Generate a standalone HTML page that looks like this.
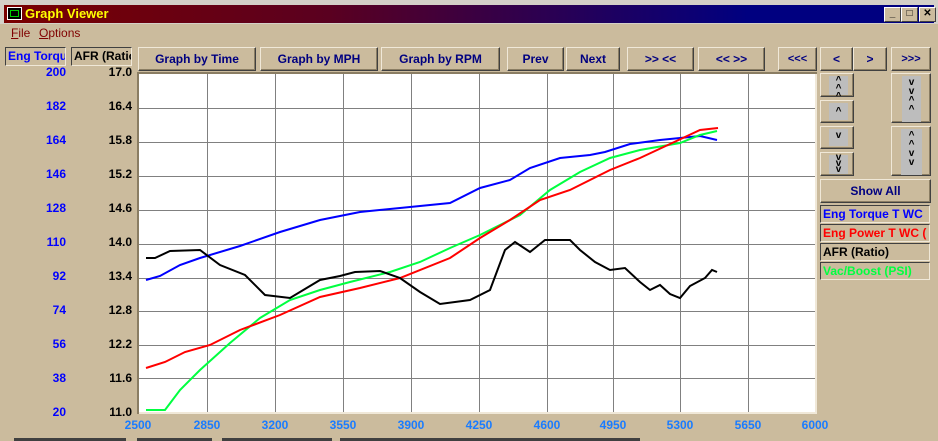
<!DOCTYPE html><html><head><style>
body{margin:0;width:938px;height:441px;background:#cbbb9d;position:relative;overflow:hidden;font-family:"Liberation Sans",sans-serif}
.a{position:absolute}
.title{left:0;top:0;width:938px;height:24px;background:#d4d0c8}
.tb{left:4px;top:5px;width:930px;height:18px;background:linear-gradient(90deg,#7a0000,#5a0020 35%,#000080 80%,#000080)}
.tt{left:25px;top:6px;color:#ff0;font-weight:bold;font-size:13px}
.wb{top:7px;width:15px;height:13px;background:#cbbb9d;border:1px solid;border-color:#fff #404040 #404040 #fff;font-size:10px;text-align:center;line-height:12px;font-weight:bold}
.menu{top:26px;font-size:12px;color:#800000}
.btn{position:absolute;background:#cbbb9d;border:1px solid;border-color:#f0e8d8 #404040 #404040 #f0e8d8;box-shadow:inset -1px -1px #8a7d63;color:#000080;font-weight:bold;font-size:12px;text-align:center;box-sizing:border-box;white-space:nowrap;overflow:hidden}
.lb{position:absolute;font-size:12px;font-weight:bold;text-align:right;width:40px}
.xl{position:absolute;top:418px;font-size:12px;font-weight:bold;color:#1a7cff;width:50px;text-align:center}
.lg{position:absolute;left:820px;width:110px;height:18px;border:1px solid;border-color:#404040 #f0e8d8 #f0e8d8 #404040;box-sizing:border-box;font-size:12px;font-weight:bold;padding-left:2px;line-height:16px;white-space:nowrap;overflow:hidden}
.g{background:#bdbdbd;position:absolute;font-size:10px;line-height:8px;text-align:center;color:#000}
</style></head><body>
<div class="a title"></div>
<div class="a tb"></div>
<div class="a" style="left:7px;top:7px;width:13px;height:11px;background:#000;border:1px solid #fff"><div style="margin:2px;height:5px;border:1px solid #0c0"></div></div>
<div class="a tt">Graph Viewer</div>
<div class="a wb" style="left:884px">_</div><div class="a wb" style="left:901px">□</div><div class="a wb" style="left:919px">✕</div>
<div class="a menu" style="left:11px"><u>F</u>ile</div><div class="a menu" style="left:39px"><u>O</u>ptions</div>
<div class="a" style="left:5px;top:47px;width:61px;height:19px;border:1px solid;border-color:#404040 #f0e8d8 #f0e8d8 #404040;box-sizing:border-box;color:#0000ff;font-size:12px;font-weight:bold;line-height:17px;padding-left:2px;overflow:hidden;white-space:nowrap">Eng Torque</div>
<div class="a" style="left:71px;top:47px;width:61px;height:19px;border:1px solid;border-color:#404040 #f0e8d8 #f0e8d8 #404040;box-sizing:border-box;color:#000;font-size:12px;font-weight:bold;line-height:17px;padding-left:2px;overflow:hidden;white-space:nowrap">AFR (Ratio)</div>
<div class="btn" style="left:138px;top:47px;width:118px;height:24px;line-height:22px">Graph by Time</div>
<div class="btn" style="left:260px;top:47px;width:118px;height:24px;line-height:22px">Graph by MPH</div>
<div class="btn" style="left:381px;top:47px;width:119px;height:24px;line-height:22px">Graph by RPM</div>
<div class="btn" style="left:507px;top:47px;width:57px;height:24px;line-height:22px">Prev</div>
<div class="btn" style="left:566px;top:47px;width:54px;height:24px;line-height:22px">Next</div>
<div class="btn" style="left:627px;top:47px;width:67px;height:24px;line-height:22px">&gt;&gt; &lt;&lt;</div>
<div class="btn" style="left:698px;top:47px;width:67px;height:24px;line-height:22px">&lt;&lt; &gt;&gt;</div>
<div class="btn" style="left:778px;top:47px;width:39px;height:24px;line-height:22px;font-size:11px">&lt;&lt;&lt;</div>
<div class="btn" style="left:820px;top:47px;width:33px;height:24px;line-height:22px">&lt;</div>
<div class="btn" style="left:853px;top:47px;width:34px;height:24px;line-height:22px">&gt;</div>
<div class="btn" style="left:891px;top:47px;width:40px;height:24px;line-height:22px;font-size:11px">&gt;&gt;&gt;</div>
<div class="btn" style="left:820px;top:73px;width:34px;height:24px"><div class="g" style="left:8px;top:2px;width:19px;height:18px;padding-top:1px">^<br>^<br>^</div></div>
<div class="btn" style="left:820px;top:100px;width:34px;height:23px"><div class="g" style="left:8px;top:2px;width:19px;height:17px;line-height:17px">^</div></div>
<div class="btn" style="left:820px;top:126px;width:34px;height:23px"><div class="g" style="left:8px;top:2px;width:19px;height:17px;line-height:14px">v</div></div>
<div class="btn" style="left:820px;top:152px;width:34px;height:24px"><div class="g" style="left:8px;top:2px;width:19px;height:19px;line-height:6px;padding-top:0">v<br>v<br>v</div></div>
<div class="btn" style="left:891px;top:73px;width:40px;height:50px"><div class="g" style="left:10px;top:2px;width:19px;height:44px;line-height:9px;padding-top:2px">v<br>v<br>^<br>^</div></div>
<div class="btn" style="left:891px;top:126px;width:40px;height:50px"><div class="g" style="left:9px;top:2px;width:21px;height:44px;line-height:9px;padding-top:2px">^<br>^<br>v<br>v</div></div>
<div class="btn" style="left:820px;top:179px;width:111px;height:24px;line-height:22px">Show All</div>
<div class="lg" style="top:205px;color:#0000ff">Eng Torque T WC</div>
<div class="lg" style="top:224px;color:#ff0000">Eng Power T WC (</div>
<div class="lg" style="top:243px;color:#000">AFR (Ratio)</div>
<div class="lg" style="top:262px;color:#00ff40">Vac/Boost (PSI)</div>
<div class="lb" style="left:26px;top:65px;color:#0000ff">200</div><div class="lb" style="left:92px;top:65px">17.0</div>
<div class="lb" style="left:26px;top:99px;color:#0000ff">182</div><div class="lb" style="left:92px;top:99px">16.4</div>
<div class="lb" style="left:26px;top:133px;color:#0000ff">164</div><div class="lb" style="left:92px;top:133px">15.8</div>
<div class="lb" style="left:26px;top:167px;color:#0000ff">146</div><div class="lb" style="left:92px;top:167px">15.2</div>
<div class="lb" style="left:26px;top:201px;color:#0000ff">128</div><div class="lb" style="left:92px;top:201px">14.6</div>
<div class="lb" style="left:26px;top:235px;color:#0000ff">110</div><div class="lb" style="left:92px;top:235px">14.0</div>
<div class="lb" style="left:26px;top:269px;color:#0000ff">92</div><div class="lb" style="left:92px;top:269px">13.4</div>
<div class="lb" style="left:26px;top:303px;color:#0000ff">74</div><div class="lb" style="left:92px;top:303px">12.8</div>
<div class="lb" style="left:26px;top:337px;color:#0000ff">56</div><div class="lb" style="left:92px;top:337px">12.2</div>
<div class="lb" style="left:26px;top:371px;color:#0000ff">38</div><div class="lb" style="left:92px;top:371px">11.6</div>
<div class="lb" style="left:26px;top:405px;color:#0000ff">20</div><div class="lb" style="left:92px;top:405px">11.0</div>
<div class="xl" style="left:113px">2500</div><div class="xl" style="left:182px">2850</div><div class="xl" style="left:250px">3200</div><div class="xl" style="left:318px">3550</div><div class="xl" style="left:386px">3900</div><div class="xl" style="left:454px">4250</div><div class="xl" style="left:522px">4600</div><div class="xl" style="left:588px">4950</div><div class="xl" style="left:655px">5300</div><div class="xl" style="left:723px">5650</div><div class="xl" style="left:790px">6000</div>
<svg class="a" style="left:0;top:0" width="938" height="441">
<rect x="137" y="72" width="680" height="342" fill="#8a7d63"/>
<rect x="139" y="74" width="678" height="340" fill="#f0e8d8"/>
<rect x="139" y="74" width="676" height="338" fill="#fff"/>
<g stroke="#808080" stroke-width="1">
<path d="M207.5 74V412M275.5 74V412M343.5 74V412M411.5 74V412M479.5 74V412M547.5 74V412M613.5 74V412M680.5 74V412M748.5 74V412"/>
<path d="M139 108.5H815M139 142.5H815M139 176.5H815M139 210.5H815M139 244.5H815M139 278.5H815M139 311.5H815M139 345.5H815M139 378.5H815"/>
</g>
<g fill="none" stroke-width="2">
<polyline stroke="#0000ff" points="146,280 160,276 180,265 200,258 240,246 280,232 320,220 360,212 400,208 450,203 480,188 510,180 530,168 560,158 590,155 605,152 630,144 660,140 700,136 717,140"/>
<polyline stroke="#00ff40" points="146,410 165,410 180,390 200,370 230,343 260,318 290,300 320,290 350,282 390,272 420,262 450,248 480,235 520,215 550,190 580,172 610,158 640,150 680,143 700,135 717,131"/>
<polyline stroke="#ff0000" points="146,368 165,362 185,352 210,345 240,330 280,315 320,297 360,288 400,278 450,258 480,238 510,220 540,200 570,190 590,180 610,170 640,158 670,144 700,130 718,128"/>
<polyline stroke="#000" points="146,258 155,258 170,251 200,250 220,265 245,275 265,295 290,298 320,280 340,276 355,272 380,271 400,278 420,292 440,304 470,300 490,290 505,250 515,242 530,252 545,240 570,240 580,250 595,262 610,270 625,268 640,282 650,290 660,285 670,294 680,298 690,286 705,278 712,270 717,272"/>
</g>
<rect x="14" y="438" width="112" height="3" fill="#404040"/><rect x="137" y="438" width="75" height="3" fill="#404040"/><rect x="222" y="438" width="110" height="3" fill="#404040"/><rect x="340" y="438" width="300" height="3" fill="#404040"/>
</svg>
</body></html>
